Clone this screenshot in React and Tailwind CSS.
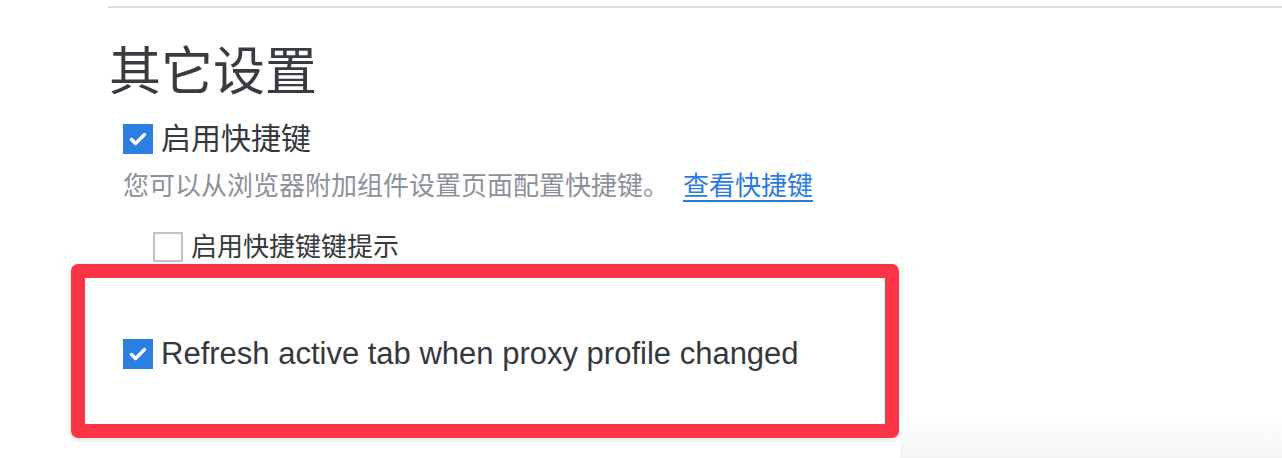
import { useState } from 'react'

const FONT = '"Liberation Sans", "Noto Sans CJK SC", sans-serif'

function Checkbox({ checked, onChange }) {
  if (!checked) {
    return (
      <button
        type="button"
        onClick={() => onChange(true)}
        className="w-[30px] h-[30px] shrink-0 border-2 border-[#c4c4c4] bg-white"
      />
    )
  }
  return (
    <button
      type="button"
      onClick={() => onChange(false)}
      className="w-[30px] h-[30px] shrink-0 bg-[#2b7fe1] flex items-center justify-center"
    >
      <svg width="30" height="30" viewBox="0 0 30 30">
        <path d="M8.5 15.5 L12.5 19.5 L21.5 10.5" fill="none" stroke="#fff" strokeWidth="3.4" strokeLinecap="round" strokeLinejoin="round" />
      </svg>
    </button>
  )
}

export default function App() {
  const [shortcuts, setShortcuts] = useState(true)
  const [hints, setHints]         = useState(false)
  const [refresh, setRefresh]     = useState(true)

  return (
    <div className="relative w-[1282px] h-[458px] overflow-hidden bg-white" style={{ fontFamily: FONT }}>
      <div className="pl-[108px] pt-[6px]">
        <div className="h-[2px] bg-[#dcdcdc]" />

        <h1 className="mt-[34px] pl-[1px] text-[52px] leading-[60px] text-[#383b3f] font-normal">其它设置</h1>

        <div className="mt-[22px] pl-[15px] flex items-center gap-[8px]">
          <Checkbox checked={shortcuts} onChange={setShortcuts} />
          <span className="text-[30px] leading-[30px] text-[#35383c]">启用快捷键</span>
        </div>

        <div className="mt-[17px] pl-[15px] text-[26px] leading-[30px] text-[#8b9199] flex items-center">
          <span>您可以从浏览器附加组件设置页面配置快捷键。</span>
          <a href="#" className="ml-[14px] text-[#2a7ae3] underline underline-offset-[5px] decoration-[2px]">查看快捷键</a>
        </div>

        <div className="mt-[31px] pl-[45px] flex items-center gap-[8px]">
          <Checkbox checked={hints} onChange={setHints} />
          <span className="text-[26px] leading-[30px] text-[#35383c]">启用快捷键键提示</span>
        </div>
      </div>

      {/* highlighted option */}
      <div className="ml-[71px] mt-[2px] w-[828px] h-[174px] border-[14px] border-[#fb3446] rounded-[7px] shadow-[0_2px_6px_rgba(0,0,0,0.12)] pl-[38px] pt-[61px]">
        <div className="flex items-center gap-[8px]">
          <Checkbox checked={refresh} onChange={setRefresh} />
          <span className="text-[31px] leading-[30px] text-[#35383c]">Refresh active tab when proxy profile changed</span>
        </div>
      </div>

      <div className="absolute right-0 bottom-0 w-[382px] h-[40px] bg-gradient-to-b from-white to-[#f4f4f4]" />
    </div>
  )
}
